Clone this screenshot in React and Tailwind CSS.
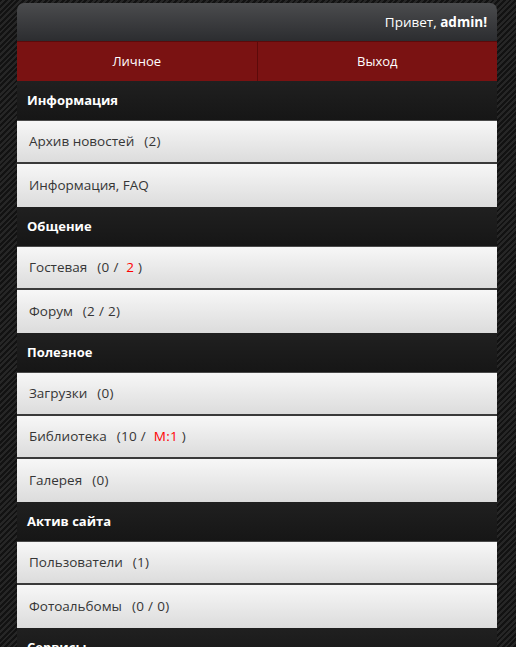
import React from 'react';

const sections = [
  {
    title: 'Информация',
    items: [
      { label: 'Архив новостей', count: <>(2)</> },
      { label: 'Информация, FAQ' },
    ],
  },
  {
    title: 'Общение',
    items: [
      { label: 'Гостевая', count: <>(0 / &nbsp;<span className="text-[#ff0000]">2</span>&nbsp;)</> },
      { label: 'Форум', count: <>(2 / 2)</> },
    ],
  },
  {
    title: 'Полезное',
    items: [
      { label: 'Загрузки', count: <>(0)</> },
      { label: 'Библиотека', count: <>(10 / &nbsp;<span className="text-[#ff0000]">M:1</span>&nbsp;)</> },
      { label: 'Галерея', count: <>(0)</> },
    ],
  },
  {
    title: 'Актив сайта',
    items: [
      { label: 'Пользователи', count: <>(1)</> },
      { label: 'Фотоальбомы', count: <>(0 / 0)</> },
    ],
  },
  { title: 'Сервисы', items: [] },
];

const Section = ({ title, items }) => (
  <div>
    <div className="h-[40px] flex items-center px-[10px] bg-gradient-to-b from-[#202020] to-[#161616] border-b border-[#4a4a4a] text-white font-bold text-[13px]">
      {title}
    </div>
    {items.map((item, i) => (
      <div
        key={item.label}
        className={`h-[43px] flex items-center px-[12px] bg-gradient-to-b from-[#f7f7f7] to-[#dcdcdc] text-[#363636] text-[13.5px] ${
          i < items.length - 1 ? 'border-b-2 border-[#3a3a3a]' : ''
        }`}
      >
        <span>{item.label}</span>
        {item.count && <span className="ml-[10px] tracking-[0.3px]">{item.count}</span>}
      </div>
    ))}
  </div>
);

export default function App() {
  return (
    <div
      className="min-h-[647px] pt-[3px] bg-[repeating-linear-gradient(135deg,#121212_0px,#121212_2px,#262626_2px,#262626_4px)]"
      style={{ fontFamily: '"Open Sans", "DejaVu Sans", sans-serif' }}
    >
      <div className="w-[480px] ml-[17px] overflow-hidden rounded-t-[7px]">
        <div className="h-[38px] flex items-center justify-end px-[10px] bg-gradient-to-b from-[#4b4c4e] to-[#2c2d30] text-white text-[13.5px]">
          Привет,&nbsp;<b>admin!</b>
        </div>
        <div className="h-[40px] flex border-t border-[#5c0a0a] bg-[#7a1212] text-white text-[13px]">
          <div className="flex-1 flex items-center justify-center border-r border-[#5c0a0a]">Личное</div>
          <div className="flex-1 flex items-center justify-center">Выход</div>
        </div>
        {sections.map((s) => (
          <Section key={s.title} {...s} />
        ))}
      </div>
    </div>
  );
}
